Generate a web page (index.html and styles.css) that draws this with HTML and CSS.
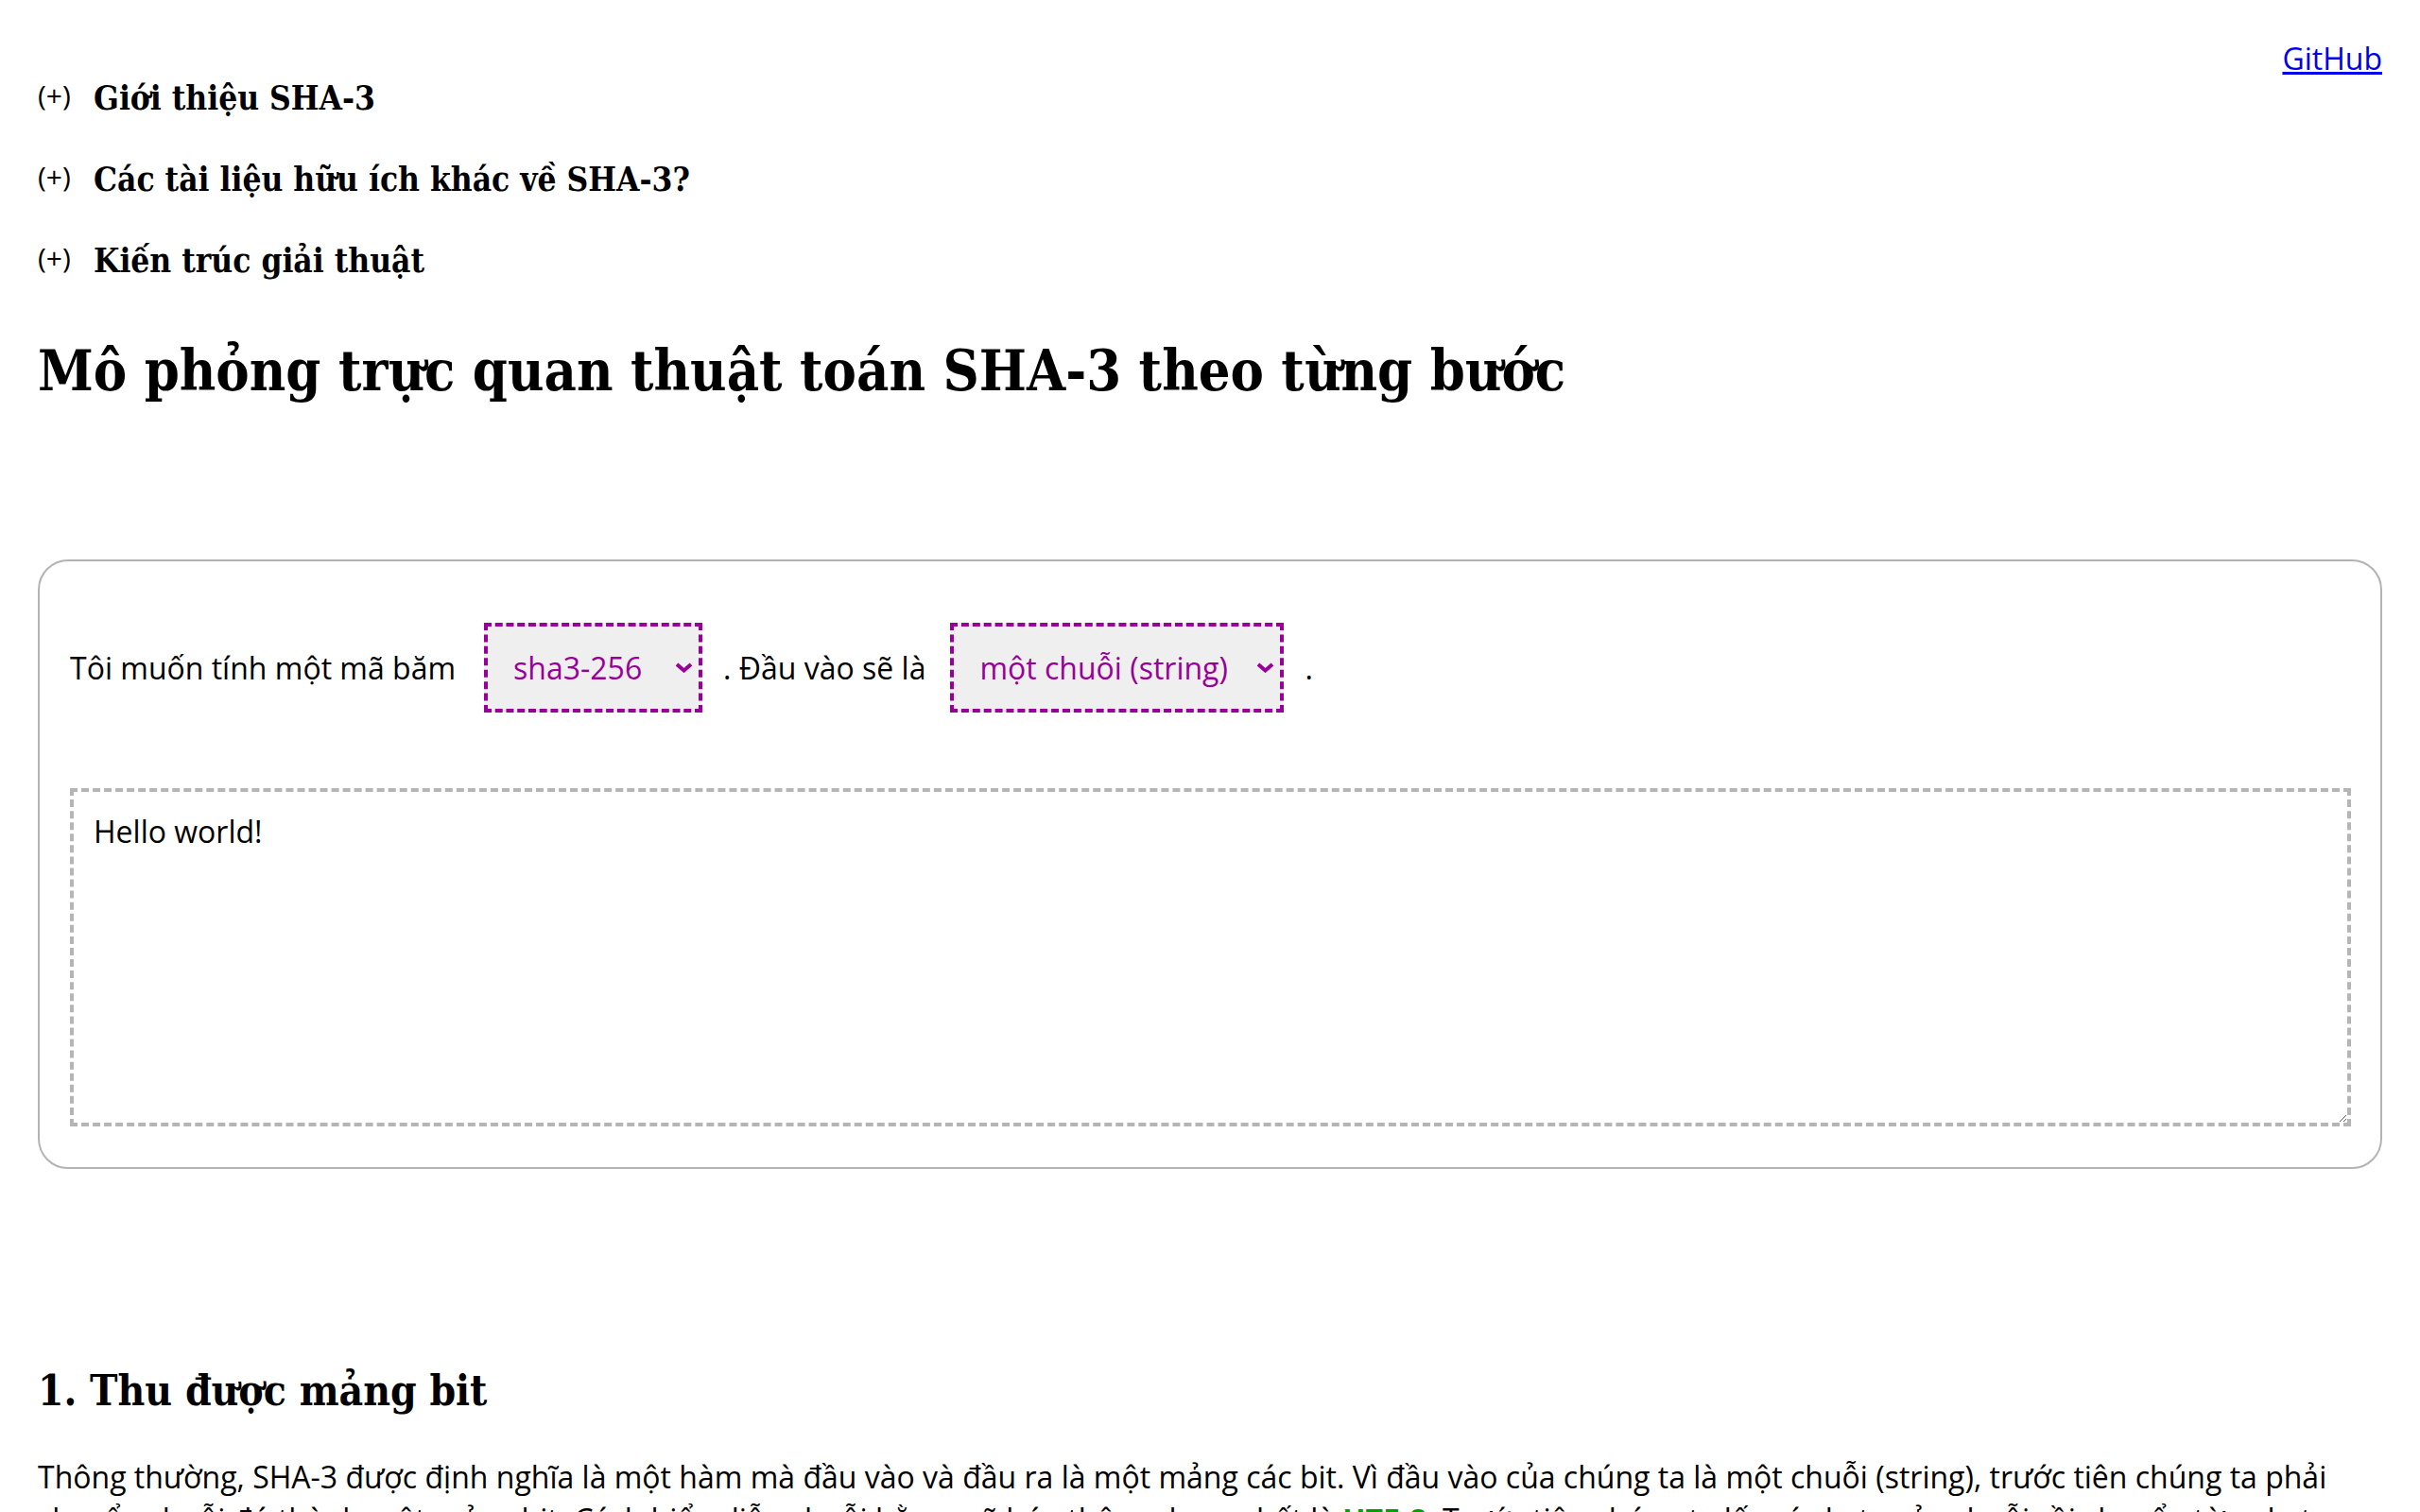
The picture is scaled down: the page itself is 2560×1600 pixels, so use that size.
FILE: index.html
```html
<!DOCTYPE html>
<html lang="vi">
<head>
  <meta charset="UTF-8" />
  <meta name="viewport" content="width=device-width, initial-scale=1.0"/>
  <title>Mô phỏng SHA-3</title>
  <link rel="stylesheet" href="styles.css">
</head>
<body>

<div class="page">
  <!-- liên kết nguồn -->
  <a class="github" href="#">GitHub</a>

  <!-- các mục thu gọn -->
  <div class="toc">
    <div class="fold"><span class="plus">(+)</span><h3>Giới thiệu SHA-3</h3></div>
    <div class="fold"><span class="plus">(+)</span><h3>Các tài liệu hữu ích khác về SHA-3?</h3></div>
    <div class="fold"><span class="plus">(+)</span><h3>Kiến trúc giải thuật</h3></div>
  </div>

  <h1>Mô phỏng trực quan thuật toán SHA-3 theo từng bước</h1>

  <!-- khung nhập liệu -->
  <div class="card">
    <div class="choose">
      <span>Tôi muốn tính một mã băm</span>
      <span class="pick">
        <select>
          <option>sha3-256</option>
          <option>sha3-224</option>
          <option>sha3-384</option>
          <option>sha3-512</option>
        </select>
        <svg class="chev" width="19" height="11" viewBox="0 0 19 11"><polyline points="2,2 9.5,8.5 17,2" fill="none" stroke="#990099" stroke-width="4"/></svg>
      </span>
      <span>. Đầu vào sẽ là</span>
      <span class="pick pick-type">
        <select>
          <option>một chuỗi (string)</option>
          <option>một chuỗi hex</option>
        </select>
        <svg class="chev" width="19" height="11" viewBox="0 0 19 11"><polyline points="2,2 9.5,8.5 17,2" fill="none" stroke="#990099" stroke-width="4"/></svg>
      </span>
      <span>.</span>
    </div>
    <textarea class="input" spellcheck="false">Hello world!</textarea>
  </div>

  <h2>1. Thu được mảng bit</h2>
  <p>Thông thường, SHA-3 được định nghĩa là một hàm mà đầu vào và đầu ra là một mảng các bit. Vì đầu vào của chúng ta là một chuỗi (string), trước tiên chúng ta phải chuyển chuỗi đó thành một mảng bit. Cách biểu diễn chuỗi bằng mã hóa thông dụng nhất là <b class="hl">UTF-8</b>. Trước tiên chúng ta lấy các byte của chuỗi rồi chuyển từng byte sang các bit.</p>
</div>

</body>
</html>
```

FILE: styles.css
```css
* {
  box-sizing: border-box;
}
html, body {
  margin: 0;
  padding: 0;
  background: #fff;
  color: #000;
  font-family: 'Open Sans', sans-serif;
  font-size: 32px;
}

.page {
  padding: 40px 40px 0;
}

.github {
  float: right;
  color: #0000ee;
  text-decoration: underline;
}

/* các mục (+) */
.toc {
  padding-top: 21px;
}
.fold {
  display: flex;
  align-items: center;
  height: 86px;
}
.plus {
  font-size: 30px;
  width: 59px;
  position: relative;
  top: -4px;
}
.fold h3 {
  margin: 0;
  font-family: 'DejaVu Serif Condensed', 'DejaVu Serif', serif;
  font-stretch: condensed;
  font-size: 35px;
  font-weight: bold;
  line-height: 86px;
}

h1, h2 {
  font-family: 'DejaVu Serif Condensed', 'DejaVu Serif', serif;
  font-stretch: condensed;
  font-weight: bold;
  margin: 0;
}
h1 {
  font-size: 59px;
  line-height: 1.2;
  margin-top: 39px;
}

/* khung chọn */
.card {
  margin-top: 163px;
  border: 2px solid #b3b3b3;
  border-radius: 32px;
  padding: 32px 31px 43px 32px;
}
.choose {
  display: flex;
  align-items: center;
  margin-top: 33px;
}
.pick {
  position: relative;
  display: inline-block;
  margin: 0 22px 0 30px;
}
.pick-type {
  margin-left: 26px;
}
.pick select {
  appearance: none;
  -webkit-appearance: none;
  height: 95px;
  padding: 0 59px 0 27px;
  font-family: 'Open Sans', sans-serif;
  font-size: 32px;
  color: #990099;
  background: #efefef;
  border: 4px dashed #990099;
  border-radius: 0;
  outline: none;
}
.pick-type select {
  padding-right: 55px;
}
.chev {
  position: absolute;
  right: 10px;
  top: 42px;
  pointer-events: none;
}

.input {
  display: block;
  width: 100%;
  height: 358px;
  margin-top: 80px;
  padding: 20px 21px;
  font-family: 'Open Sans', sans-serif;
  font-size: 32px;
  border: 4px dashed #b5b5b5;
  border-radius: 0;
  outline: none;
  resize: vertical;
}

h2 {
  font-size: 44px;
  margin-top: 209px;
}
p {
  margin: 44px 0 0;
  line-height: 1.4;
}
.hl {
  color: #00a000;
}
```
